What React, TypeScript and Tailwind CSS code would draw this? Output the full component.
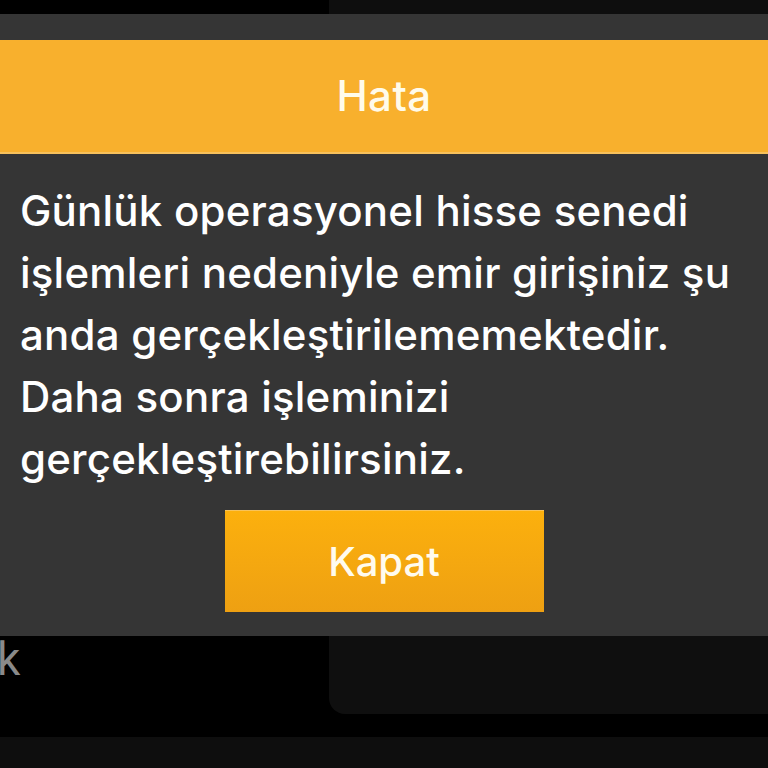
import React from "react";

const font = { fontFamily: "Inter, 'Noto Sans', 'Liberation Sans', sans-serif" };

export default function App() {
  const lines = [
    "Günlük operasyonel hisse senedi",
    "işlemleri nedeniyle emir girişiniz şu",
    "anda gerçekleştirilememektedir.",
    "Daha sonra işleminizi",
    "gerçekleştirebilirsiniz.",
  ];
  return (
    <div className="w-[768px] h-[768px] bg-black overflow-hidden flex flex-col" style={font}>
      <div className="h-[14px] flex shrink-0">
        <div className="w-[329px] bg-black" />
        <div className="flex-1 bg-[#0e0e0e]" />
      </div>
      <div className="h-[622px] shrink-0 flex flex-col bg-[#353535]">
        <div className="h-[26px] shrink-0" />
        <div className="h-[114px] shrink-0 bg-[#f8b02d] border-b-2 border-[#f7c15c] flex items-center justify-center">
          <span className="text-[42px] font-medium text-[#fffbea] tracking-[0.01em] leading-none">Hata</span>
        </div>
        <div className="flex-1 flex flex-col">
          <div className="pl-[20px] pt-[26px] text-white text-[42px] font-medium leading-[62px] tracking-[0.005em]">
            {lines.map((l) => (
              <div key={l} className="whitespace-nowrap">{l}</div>
            ))}
          </div>
          <div className="flex justify-center mt-[20px]">
            <button className="w-[319px] h-[102px] bg-gradient-to-b from-[#fcb00d] to-[#eea012] border-t border-[#f8c35a] flex items-center justify-center">
              <span className="text-[40px] font-medium text-[#fffbee] leading-none">Kapat</span>
            </button>
          </div>
        </div>
      </div>
      <div className="flex-1 flex flex-col">
        <div className="h-[78px] flex shrink-0">
          <div className="w-[329px] bg-black overflow-hidden">
            <span className="block ml-[-3px] text-[46px] leading-[46px] text-[#8a8a8a]" style={{ fontFamily: "Roboto, 'Liberation Sans', sans-serif" }}>k</span>
          </div>
          <div className="flex-1 bg-[#0f0f0f] rounded-bl-[16px]" />
        </div>
        <div className="h-[23px] shrink-0 bg-black" />
        <div className="flex-1 bg-[#0e0e0e]" />
      </div>
    </div>
  );
}
